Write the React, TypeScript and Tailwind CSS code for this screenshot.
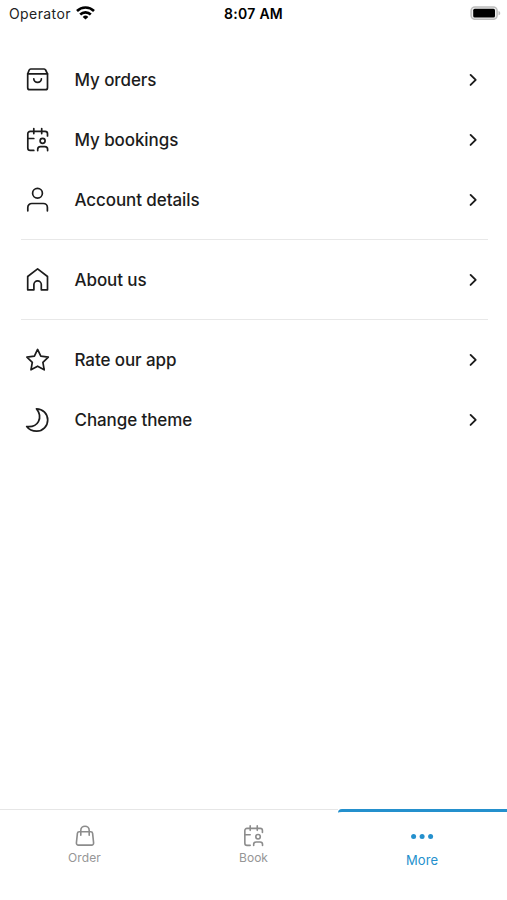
import type { ReactNode } from "react";

interface IconProps {
  children: ReactNode;
}

function Icon({ children }: IconProps) {
  return (
    <svg
      viewBox="0 0 28 28"
      className="size-7 shrink-0"
      fill="none"
      stroke="currentColor"
      strokeWidth="1.7"
      strokeLinecap="round"
      strokeLinejoin="round"
    >
      {children}
    </svg>
  );
}

const calendarPaths = (
  <>
    <path d="M10.8 24.4H7.2a2.4 2.4 0 0 1-2.4-2.4V7.8a2.4 2.4 0 0 1 2.4-2.4h14.9a2.4 2.4 0 0 1 2.4 2.4V10" />
    <path d="M10.8 2.6v5M18.7 2.6v5M4.8 12.5h6" />
    <circle cx="19.6" cy="14.8" r="2.5" />
    <path d="M14.7 24.6v-1.3a2.7 2.7 0 0 1 2.7-2.7h4.5a2.7 2.7 0 0 1 2.7 2.7v1.3" />
  </>
);

const icons = {
  orders: (
    <Icon>
      <path d="M4.7 7.8 6.2 4a1.6 1.6 0 0 1 1.5-1h13.4a1.6 1.6 0 0 1 1.5 1l1.9 3.8v13.9a2 2 0 0 1-2 2H6.7a2 2 0 0 1-2-2z" />
      <path d="M4.7 7.8h19.8M10.8 12.8a3.8 3.5 0 0 0 7.6 0" />
    </Icon>
  ),
  bookings: <Icon>{calendarPaths}</Icon>,
  account: (
    <Icon>
      <circle cx="14.5" cy="7.3" r="4.9" />
      <path d="M4.8 24.8v-3.3a4 4 0 0 1 4-4h11.6a4 4 0 0 1 4 4v3.3" />
    </Icon>
  ),
  about: (
    <Icon>
      <path d="M4.7 10.5 14.6 2.9l9.9 7.6v13.3h-6.2v-5.2a3.7 3.7 0 0 0-7.4 0v5.2H4.7z" />
    </Icon>
  ),
  rate: (
    <Icon>
      <path d="m14.6 3.4 3.2 6.8 7.5 1-5.4 5.2 1.3 7.4-6.6-3.6-6.6 3.6 1.3-7.4-5.4-5.2 7.5-1z" />
    </Icon>
  ),
  theme: (
    <Icon>
      <path d="M13.4 2.8C20 2.9 24.7 7.9 24.7 14s-4.8 11.2-11 11.2c-4.1 0-7.8-1.7-10-4.7 5.6.6 9.8-1.3 11.7-4.9 2.2-4.1 1.2-8.9-2-12.8z" />
    </Icon>
  ),
};

const sections = [
  [
    { label: "My orders", icon: icons.orders },
    { label: "My bookings", icon: icons.bookings },
    { label: "Account details", icon: icons.account },
  ],
  [{ label: "About us", icon: icons.about }],
  [
    { label: "Rate our app", icon: icons.rate },
    { label: "Change theme", icon: icons.theme },
  ],
];

function StatusBar() {
  return (
    <header className="grid h-7 grid-cols-3 items-center pr-1.5 pb-0.5 pl-[9px] text-black">
      <div className="flex items-center gap-[5px]">
        <span className="text-[14px] tracking-[0.4px] text-[#222]">Operator</span>
        <svg viewBox="0 0 19 14" className="h-3.5 w-[19px]" fill="none" stroke="currentColor" strokeWidth="2.6">
          <path d="M1 5a12.2 12.2 0 0 1 17 0M4.2 8.5a7.6 7.6 0 0 1 10.6 0" />
          <path d="m9.5 13.6-2.800-2.700a4 4 0 0 1 5.600 0z" fill="currentColor" stroke="none" />
        </svg>
      </div>
      <span className="pr-[3px] text-center text-[14px] font-semibold tracking-[0.3px]">8:07 AM</span>
      <svg viewBox="0 0 31 14" className="h-3.5 w-[31px] justify-self-end">
        <rect x="1.1" y=".9" width="26" height="12.4" rx="3.8" fill="#eee" stroke="#bdbdbd" strokeWidth="1.5" />
        <rect x="3.2" y="2.8" width="21.8" height="8.6" rx="1.5" fill="#000" />
        <path d="M28.5 4.9c2.3.7 2.3 3.7 0 4.4z" fill="#bdbdbd" />
      </svg>
    </header>
  );
}

function MenuRow({ label, icon }: { label: string; icon: ReactNode }) {
  return (
    <button className="flex h-[60px] w-full items-center pr-7 pl-[23px] text-left">
      {icon}
      <span className="ml-[23.5px] flex-1 pt-0.5 text-[17px] font-medium tracking-[-0.09px]">{label}</span>
      <svg
        viewBox="0 0 10 14"
        className="h-3.5 w-2.5"
        fill="none"
        stroke="currentColor"
        strokeWidth="1.9"
        strokeLinecap="round"
        strokeLinejoin="round"
      >
        <path d="m1.6 1.9 5.1 5-5.1 5" />
      </svg>
    </button>
  );
}

export default function App() {
  return (
    <div className="flex h-[900px] w-[507px] flex-col overflow-hidden bg-white font-['Inter',sans-serif] text-[#1c1c1c]">
      <StatusBar />
      <main className="flex-1 pt-[22px]">
        {sections.map((rows, i) => (
          <section key={rows[0].label}>
            {i > 0 && (
              <div className="h-5 pt-[9px] pr-[19px] pl-[21px]">
                <div className="h-px bg-[#e8e8e8]" />
              </div>
            )}
            {rows.map((row) => (
              <MenuRow key={row.label} {...row} />
            ))}
          </section>
        ))}
      </main>
      <nav className="grid h-[91px] grid-cols-3 text-[#8c8c8c]">
        <button className="flex flex-col items-center border-t border-[#e6e6e6] pt-[14px]">
          <svg
            viewBox="0 0 24 24"
            className="size-6"
            fill="none"
            stroke="currentColor"
            strokeWidth="1.6"
            strokeLinecap="round"
            strokeLinejoin="round"
          >
            <path d="M6.2 7.7h11.6a1.8 1.8 0 0 1 1.8 1.6l1 9.6a2 2 0 0 1-2 2.2H5.4a2 2 0 0 1-2-2.2l1-9.6a1.8 1.8 0 0 1 1.8-1.6z" />
            <path d="M7.8 11.2V6.4a4.2 4.2 0 0 1 8.4 0v4.8" />
          </svg>
          <span className="mt-0.5 text-[12px] leading-4 tracking-[0.1px] text-[#969696]">Order</span>
        </button>
        <button className="flex flex-col items-center border-t border-[#e6e6e6] pt-[14px]">
          <svg
            viewBox="0.5 0.5 28 28"
            className="size-[25px]"
            fill="none"
            stroke="currentColor"
            strokeWidth="1.8"
            strokeLinecap="round"
            strokeLinejoin="round"
          >
            {calendarPaths}
          </svg>
          <span className="mt-px text-[12px] leading-4 text-[#969696]">Book</span>
        </button>
        <button className="flex flex-col items-center rounded-tl-sm border-t-[3px] border-[#2490cd] pt-[13px] pr-px text-[#2490cd]">
          <svg viewBox="0 0 24 24" className="size-6" fill="currentColor">
            <circle cx="3.6" cy="11.4" r="2.5" />
            <circle cx="12.1" cy="11.4" r="2.5" />
            <circle cx="20.6" cy="11.4" r="2.5" />
          </svg>
          <span className="mt-[3px] text-[13px] leading-4 tracking-[0.1px]">More</span>
        </button>
      </nav>
    </div>
  );
}
